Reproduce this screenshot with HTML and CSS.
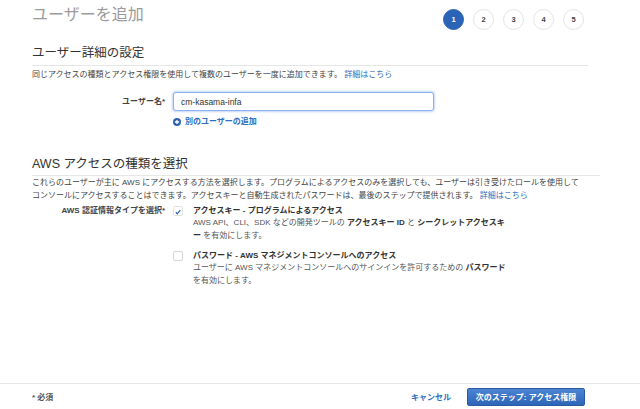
FILE: index.html
```html
<!DOCTYPE html>
<html lang="ja">
<head>
<meta charset="utf-8">
<link rel="stylesheet" href="styles.css">
</head>
<body>
<div class="page">
  <header class="top">
    <h1 class="title">ユーザーを追加</h1>
    <ol class="steps">
      <li class="step active">1</li>
      <li class="step">2</li>
      <li class="step">3</li>
      <li class="step">4</li>
      <li class="step">5</li>
    </ol>
  </header>

  <section class="sec sec1">
    <h2 class="sec-title">ユーザー詳細の設定</h2>
    <p class="desc">同じアクセスの種類とアクセス権限を使用して複数のユーザーを一度に追加できます。 <a class="link" href="#">詳細はこちら</a></p>
    <div class="row row-user">
      <label class="lbl">ユーザー名*</label>
      <div class="ctl">
        <input class="inp" type="text" value="cm-kasama-infa">
        <a class="add" href="#"><span class="plus"><svg viewBox="0 0 10 10" width="8" height="8"><circle cx="5" cy="5" r="5" fill="#2d64b3"/><path d="M5 2.4v5.2M2.4 5h5.2" stroke="#fff" stroke-width="1.6"/></svg></span>別のユーザーの追加</a>
      </div>
    </div>
  </section>

  <section class="sec sec2">
    <h2 class="sec-title">AWS アクセスの種類を選択</h2>
    <p class="desc desc2">これらのユーザーが主に AWS にアクセスする方法を選択します。プログラムによるアクセスのみを選択しても、ユーザーは引き受けたロールを使用して<br>コンソールにアクセスすることはできます。アクセスキーと自動生成されたパスワードは、最後のステップで提供されます。 <a class="link" href="#">詳細はこちら</a></p>
    <div class="row row-type">
      <label class="lbl">AWS 認証情報タイプを選択*</label>
      <div class="ctl opts">
        <div class="opt">
          <span class="cb checked"><svg viewBox="0 0 10 10" width="10" height="10"><path d="M2.3 5.3l1.8 1.9 3.8-4.6" fill="none" stroke="#2d64b3" stroke-width="1.5"/></svg></span>
          <div class="opt-body">
            <div class="opt-title">アクセスキー - プログラムによるアクセス</div>
            <div class="opt-desc">AWS API、CLI、SDK などの開発ツールの <b>アクセスキー ID</b> と <b>シークレットアクセスキ<br>ー</b> を有効にします。</div>
          </div>
        </div>
        <div class="opt">
          <span class="cb"></span>
          <div class="opt-body">
            <div class="opt-title">パスワード - AWS マネジメントコンソールへのアクセス</div>
            <div class="opt-desc">ユーザーに AWS マネジメントコンソールへのサインインを許可するための <b>パスワード</b><br>を有効にします。</div>
          </div>
        </div>
      </div>
    </div>
  </section>

  <footer class="foot">
    <span class="req">* 必須</span>
    <div class="actions">
      <a class="cancel" href="#">キャンセル</a>
      <button class="btn" type="button">次のステップ: アクセス権限</button>
    </div>
  </footer>
</div>
</body>
</html>
```

FILE: styles.css
```css
* { box-sizing: border-box; }
html, body { margin: 0; padding: 0; }
body {
  font-family: "Liberation Sans", "Noto Sans CJK JP", sans-serif;
  color: #444;
  background: #fff;
}
.page {
  min-height: 409px;
  display: flex;
  flex-direction: column;
}
.top {
  display: flex;
  justify-content: space-between;
  align-items: flex-start;
  width: 556px;
  margin-left: 32px;
  height: 30px;
}
.title {
  margin: 5px 0 0;
  font-size: 16px;
  line-height: 20px;
  font-weight: normal;
  color: #9b9b9b;
}
.steps {
  list-style: none;
  margin: 9px 4px 0 0;
  padding: 0;
  display: flex;
  gap: 9px;
}
.step {
  width: 21px;
  height: 21px;
  border-radius: 50%;
  border: 1px solid #e4e4e4;
  display: flex;
  align-items: center;
  justify-content: center;
  font-size: 7.5px;
  font-weight: bold;
  color: #444;
}
.step.active {
  background: #2b63b6;
  border-color: #2b63b6;
  color: #fff;
}
.sec { margin-left: 32px; }
.sec1 { width: 556px; }
.sec2 { width: 568px; }
.sec-title {
  margin: 0;
  font-size: 12.5px;
  line-height: 16px;
  font-weight: normal;
  color: #333;
  padding-bottom: 4px;
  border-bottom: 1px solid #e6e6e6;
}
.sec1 .sec-title { margin-top: 15px; }
.sec2 .sec-title { margin-top: 28px; padding-bottom: 3px; }
.desc {
  margin: 3px 0 0;
  font-size: 8px;
  line-height: 12px;
  color: #444;
}
.desc2 { margin-top: 0; line-height: 13px; }
.link { color: #2d6ebd; text-decoration: none; }
.row {
  display: grid;
  grid-template-columns: 133px 1fr;
  column-gap: 8px;
}
.lbl {
  text-align: right;
  font-size: 8px;
  font-weight: bold;
  color: #444;
}
.row-user { margin-top: 11px; }
.row-user .lbl { line-height: 19px; }
.inp {
  display: block;
  width: 261px;
  height: 19px;
  border: 1px solid #8db2ec;
  border-radius: 3px;
  box-shadow: 0 0 2px 1px rgba(120, 165, 235, 0.45);
  padding: 0 7px;
  font-family: "Liberation Sans", "Noto Sans CJK JP", sans-serif;
  font-size: 8.5px;
  color: #333;
  outline: none;
}
.add {
  display: flex;
  align-items: center;
  gap: 4px;
  margin-top: 5px;
  font-size: 8px;
  line-height: 12px;
  font-weight: bold;
  color: #2d6ebd;
  text-decoration: none;
}
.plus { display: flex; }
.row-type { margin-top: 3px; }
.row-type .lbl { line-height: 12px; }
.opts {
  display: flex;
  flex-direction: column;
  gap: 8px;
}
.opt {
  display: flex;
  gap: 10px;
  align-items: flex-start;
}
.cb {
  flex: none;
  width: 10px;
  height: 10px;
  margin-top: 1px;
  border: 1px solid #d8d8d8;
  border-radius: 2px;
  display: flex;
}
.cb.checked { border-color: #e2e2e2; }
.opt-title {
  font-size: 8px;
  line-height: 12px;
  font-weight: bold;
  color: #333;
}
.opt-desc {
  font-size: 8px;
  line-height: 12.5px;
  color: #555;
}
.opt-desc b { color: #333; }
.foot {
  margin-top: auto;
  height: 26px;
  border-top: 1px solid #e6e6e6;
  display: flex;
  align-items: center;
  justify-content: space-between;
  padding: 0 55px 0 32px;
}
.req {
  font-size: 8px;
  font-weight: bold;
  color: #555;
}
.actions {
  display: flex;
  align-items: center;
  gap: 16px;
}
.cancel {
  font-size: 8px;
  font-weight: bold;
  color: #2d6ebd;
  text-decoration: none;
}
.btn {
  width: 118px;
  height: 18px;
  border: 1px solid #2a5aa3;
  border-radius: 2px;
  background: linear-gradient(#4a84d2, #2e66b7);
  color: #fff;
  font-family: "Liberation Sans", "Noto Sans CJK JP", sans-serif;
  font-size: 8px;
  font-weight: bold;
  padding: 0;
}
```
